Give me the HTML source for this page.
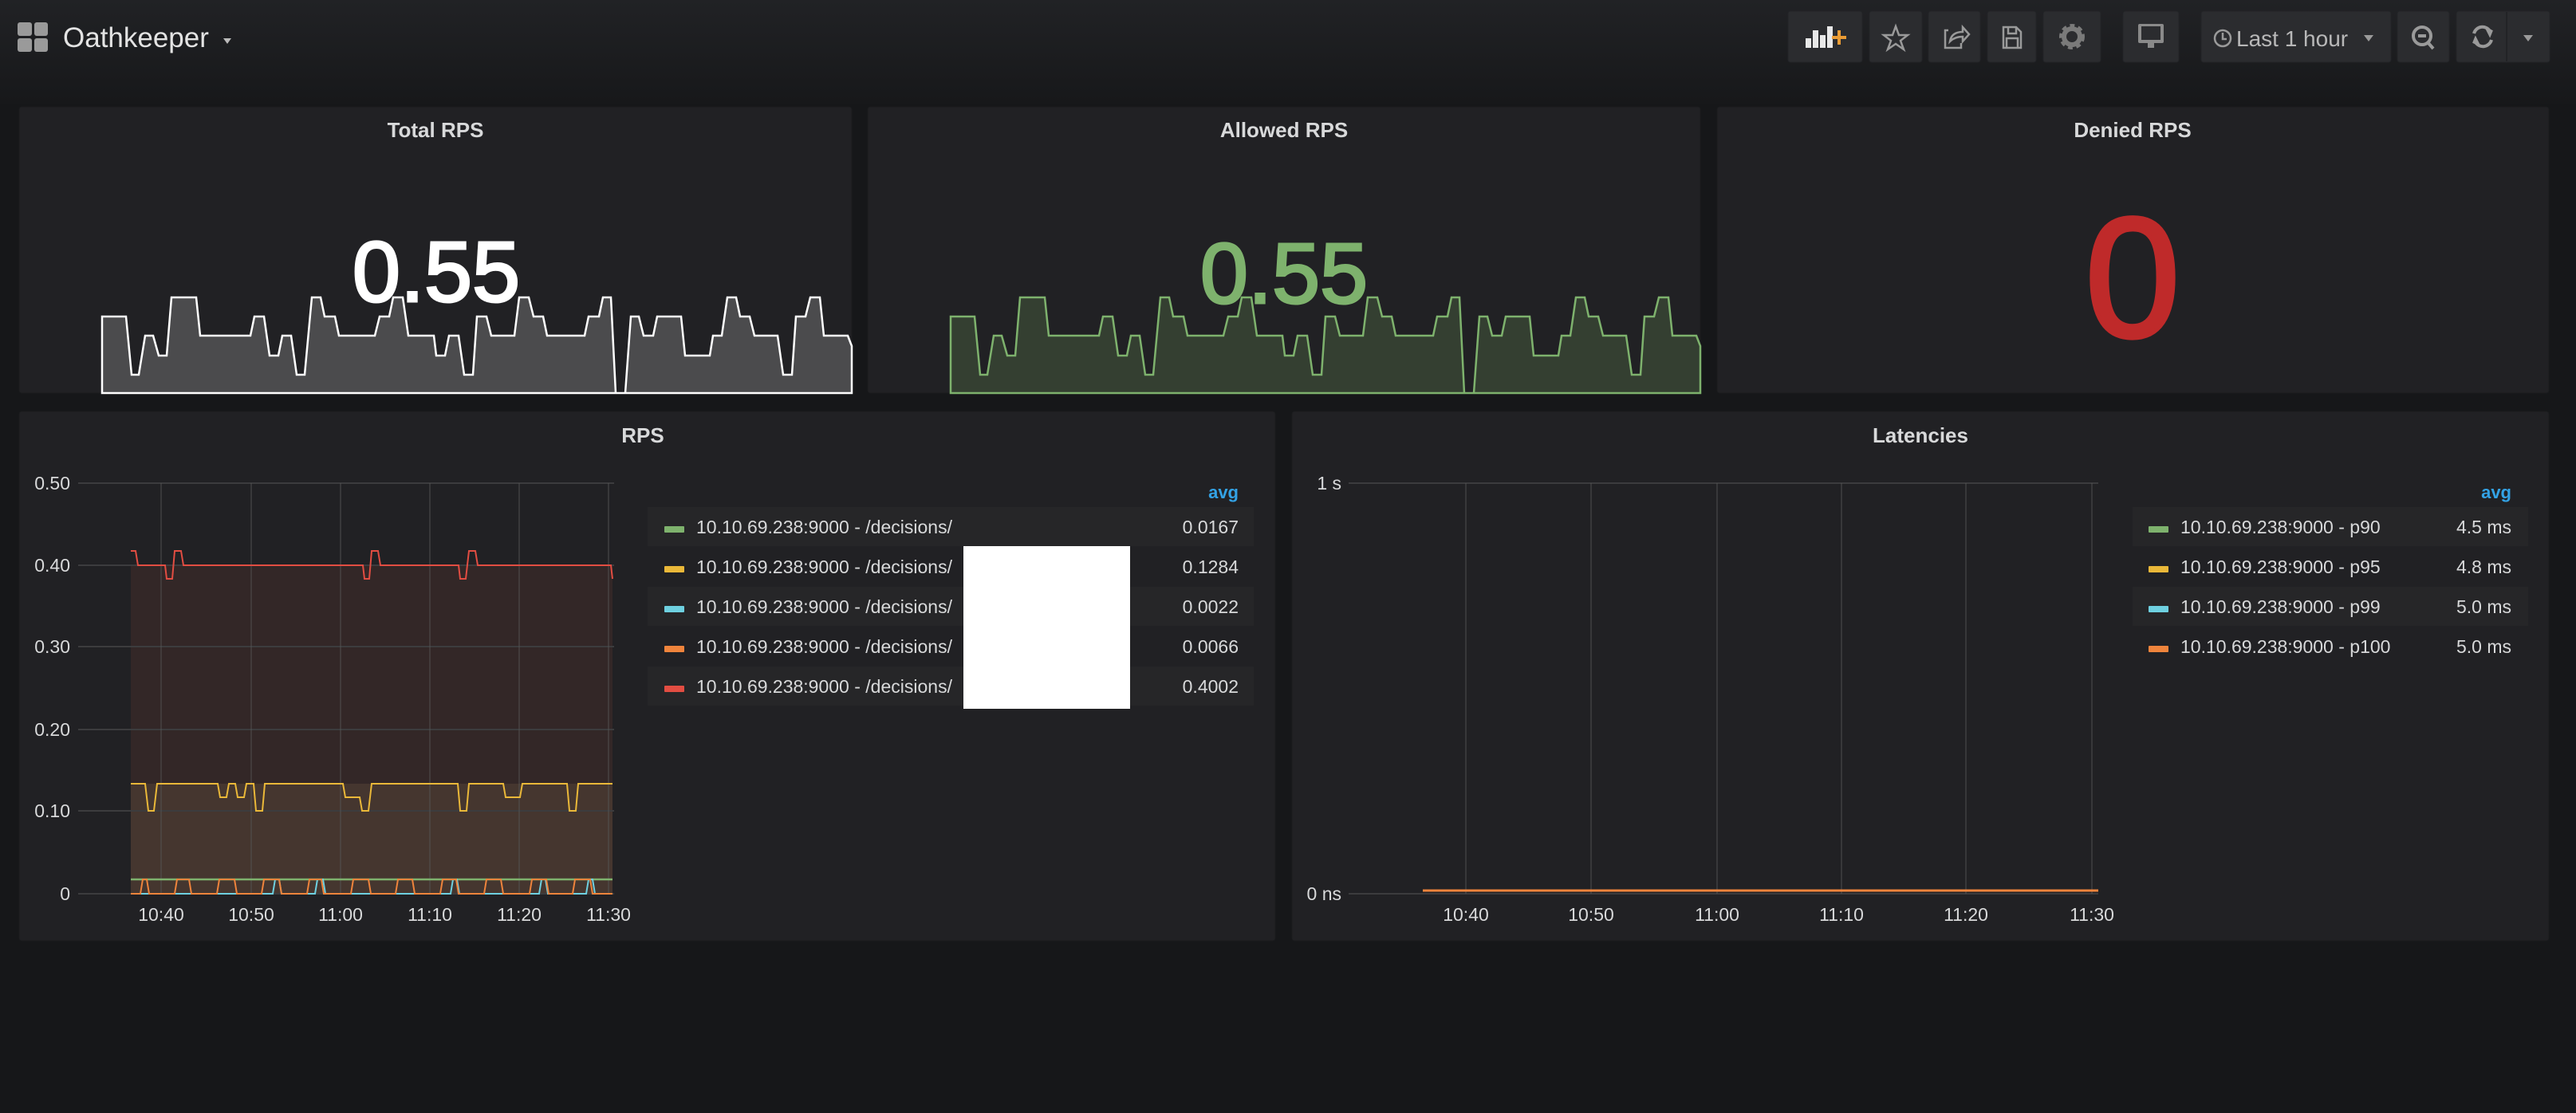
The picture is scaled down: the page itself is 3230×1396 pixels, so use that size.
<!DOCTYPE html>
<html><head><meta charset="utf-8"><style>
html,body{margin:0;padding:0;background:#161719;width:3230px;height:1396px;overflow:hidden}
svg{display:block}
text{font-family:"Liberation Sans",sans-serif}
</style></head><body>
<svg width="3230" height="1396" viewBox="0 0 3230 1396" xmlns="http://www.w3.org/2000/svg">
<defs>
<linearGradient id="hg" x1="0" y1="0" x2="0" y2="1"><stop offset="0" stop-color="#212225"/><stop offset="1" stop-color="#17181a"/></linearGradient>
<path id="spark" d="M104,359 L104,263 L134,263 L141,336 L150,336 L158,287 L168,287 L175,312 L185,312 L191,239 L222,239 L227,287 L290,287 L295,263 L307,263 L314,312 L325,312 L330,287 L341,287 L348,336 L358,336 L367,239 L378,239 L383,263 L396,263 L401,287 L446,287 L452,263 L464,263 L469,239 L481,239 L488,287 L520,287 L523,312 L534,312 L539,287 L551,287 L558,336 L569,336 L574,263 L586,263 L592,287 L621,287 L627,239 L639,239 L645,263 L657,263 L662,287 L709,287 L714,263 L727,263 L732,239 L742,239 L748,359 L760,359 L767,263 L777,263 L783,287 L795,287 L800,263 L830,263 L835,312 L866,312 L870,287 L881,287 L888,239 L899,239 L904,263 L916,263 L922,287 L951,287 L958,336 L969,336 L974,263 L986,263 L992,239 L1004,239 L1009,287 L1039,287 L1044,300 L1044,359 Z"/>
</defs>
<rect x="0" y="0" width="3230" height="130" fill="url(#hg)"/>
<g fill="#9a9a9a">
<rect x="22" y="28" width="18" height="17" rx="3"/><rect x="43" y="28" width="17" height="17" rx="3"/>
<rect x="22" y="48" width="18" height="17" rx="3"/><rect x="43" y="48" width="17" height="17" rx="3"/>
</g>
<text x="79" y="59" font-size="35" fill="#e3e3e3">Oathkeeper</text>
<path d="M280,48 L290,48 L285,55 Z" fill="#bbb"/>
<g fill="#2b2c2f" stroke="#232427">
<rect x="2242" y="14" width="93" height="64" rx="3"/>
<rect x="2344" y="14" width="66" height="64" rx="3"/>
<rect x="2418" y="14" width="65" height="64" rx="3"/>
<rect x="2492" y="14" width="61" height="64" rx="3"/>
<rect x="2562" y="14" width="72" height="64" rx="3"/>
<rect x="2662" y="14" width="70" height="64" rx="3"/>
<rect x="2760" y="14" width="238" height="64" rx="3"/>
<rect x="3006" y="14" width="65" height="64" rx="3"/>
<rect x="3080" y="14" width="117" height="64" rx="3"/>
</g>
<line x1="3143" y1="15" x2="3143" y2="77" stroke="#222326" stroke-width="2"/>
<g fill="#e8e8e8"><rect x="2264" y="48" width="7" height="12"/><rect x="2273" y="38" width="7" height="22"/><rect x="2282" y="44" width="7" height="16"/><rect x="2291" y="33" width="7" height="27"/></g>
<path d="M2304,38 h4 v7 h7 v4 h-7 v7 h-4 v-7 h-7 v-4 h7z" fill="#eb9c34"/>
<path d="M2377,33 l4,11 h11 l-9,7 l4,11 l-10,-7 l-10,7 l4,-11 l-9,-7 h11z" fill="none" stroke="#9a9a9a" stroke-width="2.5"/>
<path d="M2443,38 h-4 v22 h20 v-6 M2445,52 q2,-12 16,-12 v-6 l8,9 l-8,9 v-6 q-10,0 -16,6z" fill="none" stroke="#9a9a9a" stroke-width="2.5"/>
<path d="M2512,34 h16 l6,6 v20 h-22z M2518,34 v8 h10 v-8 M2516,48 h14 v12 h-14z" fill="none" stroke="#9a9a9a" stroke-width="2.5"/>
<circle cx="2598" cy="46" r="12" fill="none" stroke="#7a7a7a" stroke-width="8" stroke-dasharray="5 4"/><circle cx="2598" cy="46" r="10" fill="none" stroke="#7a7a7a" stroke-width="6"/>
<rect x="2681" y="30" width="32" height="24" rx="2" fill="#8a8a8a"/><rect x="2685" y="33" width="24" height="17" fill="#2b2c2f"/><rect x="2693" y="54" width="8" height="6" fill="#8a8a8a"/>
<circle cx="2787" cy="48" r="10" fill="none" stroke="#9a9a9a" stroke-width="2.5"/><path d="M2787,41 v8 h5" stroke="#9a9a9a" stroke-width="2.5" fill="none"/>
<text x="2804" y="58" font-size="28" fill="#b8b8b8">Last 1 hour</text>
<path d="M2964,44 L2976,44 L2970,52 Z" fill="#9a9a9a"/>
<circle cx="3037" cy="45" r="11" fill="none" stroke="#9a9a9a" stroke-width="4"/><path d="M3032,45 h10 M3044,53 l7,8" stroke="#9a9a9a" stroke-width="4"/>
<path d="M3102,42 a11,11 0 0 1 20,-3 M3124,50 a11,11 0 0 1 -20,3" fill="none" stroke="#9a9a9a" stroke-width="4"/>
<path d="M3118,36 l6,3 l-2,5z M3108,56 l-6,-3 l2,-5z" fill="#9a9a9a" stroke="#9a9a9a" stroke-width="3"/>
<path d="M3164,44 L3176,44 L3170,52 Z" fill="#9a9a9a"/>

<g fill="#212124" stroke="#1a1b1d">
<rect x="24" y="134" width="1044" height="359" rx="3"/>
<rect x="1088" y="134" width="1044" height="359" rx="3"/>
<rect x="2153" y="134" width="1043" height="359" rx="3"/>
<rect x="24" y="516" width="1575" height="664" rx="3"/>
<rect x="1620" y="516" width="1576" height="664" rx="3"/>
</g>
<g transform="translate(24,134)"><use href="#spark" fill="#4b4b4d" stroke="#ffffff" stroke-width="2.5"/></g>
<g transform="translate(1088,134)"><use href="#spark" fill="#343f31" stroke="#7eb26d" stroke-width="2.5"/></g>
<g font-weight="bold" font-size="26" fill="#d8d9da" text-anchor="middle">
<text x="546" y="172">Total RPS</text>
<text x="1610" y="172">Allowed RPS</text>
<text x="2674" y="172">Denied RPS</text>
<text x="806" y="555">RPS</text>
<text x="2408" y="555">Latencies</text>
</g>
<g font-size="108" text-anchor="middle" stroke-width="3">
<text x="547" y="378" fill="#ffffff" stroke="#ffffff">0.55</text>
<text x="1610" y="380" fill="#7eb26d" stroke="#7eb26d">0.55</text>
</g>
<text x="2674" y="422" font-size="214" text-anchor="middle" fill="#bf2a2a" stroke="#bf2a2a" stroke-width="5">0</text>

<rect x="164" y="709" width="604" height="412" fill="#332727"/>
<rect x="164" y="983" width="604" height="138" fill="#45362f"/>
<g stroke="#3c3c3e" stroke-width="2">
<line x1="98" y1="606" x2="770" y2="606"/><line x1="98" y1="709" x2="770" y2="709"/><line x1="98" y1="811" x2="770" y2="811"/><line x1="98" y1="915" x2="770" y2="915"/><line x1="98" y1="1017" x2="770" y2="1017"/><line x1="98" y1="1121" x2="770" y2="1121"/>
</g>
<g stroke="#555" stroke-width="1.5" opacity="0.6">
<line x1="202" y1="606" x2="202" y2="1121"/><line x1="315" y1="606" x2="315" y2="1121"/><line x1="427" y1="606" x2="427" y2="1121"/><line x1="539" y1="606" x2="539" y2="1121"/><line x1="651" y1="606" x2="651" y2="1121"/><line x1="763" y1="606" x2="763" y2="1121"/>
</g>
<path d="M164,691 L170,691 L173,709 L207,709 L209,726 L216,726 L219,691 L227,691 L230,709 L455,709 L457,726 L463,726 L466,691 L474,691 L477,709 L575,709 L577,726 L584,726 L588,691 L596,691 L599,709 L766,709 L768,726" fill="none" stroke="#e24d42" stroke-width="2"/>
<path d="M164,983 L182,983 L186,1017 L193,1017 L197,983 L273,983 L276,1000 L284,1000 L287,983 L295,983 L298,1000 L306,1000 L309,983 L318,983 L321,1017 L329,1017 L332,983 L430,983 L433,1000 L451,1000 L454,1017 L462,1017 L466,983 L574,983 L577,1017 L585,1017 L588,983 L631,983 L634,1000 L652,1000 L655,983 L711,983 L714,1017 L722,1017 L725,983 L768,983" fill="none" stroke="#eab839" stroke-width="2"/>
<line x1="164" y1="1103" x2="768" y2="1103" stroke="#7eb26d" stroke-width="2.5"/>
<path d="M164,1121 L342,1121 L345,1103 L350,1103 L353,1121 L395,1121 L398,1103 L405,1103 L408,1121 L565,1121 L568,1103 L573,1103 L576,1121 L676,1121 L679,1103 L684,1103 L687,1121 L735,1121 L738,1103 L743,1103 L746,1121 L768,1121" fill="none" stroke="#6ed0e0" stroke-width="2"/>
<path d="M164,1121 L176,1121 L179,1103 L184,1103 L187,1121 L219,1121 L222,1103 L237,1103 L240,1121 L272,1121 L275,1103 L294,1103 L297,1121 L328,1121 L331,1103 L350,1103 L353,1121 L385,1121 L388,1103 L403,1103 L406,1121 L440,1121 L443,1103 L462,1103 L465,1121 L496,1121 L499,1103 L517,1103 L520,1121 L552,1121 L555,1103 L572,1103 L575,1121 L607,1121 L610,1103 L628,1103 L631,1121 L664,1121 L667,1103 L685,1103 L688,1121 L718,1121 L721,1103 L740,1103 L743,1121 L768,1121" fill="none" stroke="#ef843c" stroke-width="2"/>
<g font-size="23" fill="#d8d9da">
<g text-anchor="end"><text x="88" y="614">0.50</text><text x="88" y="717">0.40</text><text x="88" y="819">0.30</text><text x="88" y="923">0.20</text><text x="88" y="1025">0.10</text><text x="88" y="1129">0</text></g>
<g text-anchor="middle"><text x="202" y="1155">10:40</text><text x="315" y="1155">10:50</text><text x="427" y="1155">11:00</text><text x="539" y="1155">11:10</text><text x="651" y="1155">11:20</text><text x="763" y="1155">11:30</text></g>
</g>
<g fill="#262628"><rect x="812" y="636" width="760" height="49"/><rect x="812" y="736" width="760" height="49"/><rect x="812" y="836" width="760" height="49"/></g>
<text x="1553" y="625" font-size="22" font-weight="bold" fill="#33a2e5" text-anchor="end">avg</text>
<rect x="833" y="660" width="25" height="8" rx="1" fill="#7eb26d"/>
<rect x="833" y="710" width="25" height="8" rx="1" fill="#eab839"/>
<rect x="833" y="760" width="25" height="8" rx="1" fill="#6ed0e0"/>
<rect x="833" y="810" width="25" height="8" rx="1" fill="#ef843c"/>
<rect x="833" y="860" width="25" height="8" rx="1" fill="#e24d42"/>
<g font-size="23" fill="#d8d9da">
<text x="873" y="669">10.10.69.238:9000 - /decisions/</text>
<text x="873" y="719">10.10.69.238:9000 - /decisions/</text>
<text x="873" y="769">10.10.69.238:9000 - /decisions/</text>
<text x="873" y="819">10.10.69.238:9000 - /decisions/</text>
<text x="873" y="869">10.10.69.238:9000 - /decisions/</text>
<g text-anchor="end"><text x="1553" y="669">0.0167</text><text x="1553" y="719">0.1284</text><text x="1553" y="769">0.0022</text><text x="1553" y="819">0.0066</text><text x="1553" y="869">0.4002</text></g>
</g>
<rect x="1208" y="685" width="209" height="204" fill="#ffffff"/>

<g stroke="#3c3c3e" stroke-width="2"><line x1="1691" y1="606" x2="2631" y2="606"/><line x1="1691" y1="1121" x2="2631" y2="1121"/></g>
<g stroke="#555" stroke-width="1.5" opacity="0.6">
<line x1="1838" y1="606" x2="1838" y2="1121"/><line x1="1995" y1="606" x2="1995" y2="1121"/><line x1="2153" y1="606" x2="2153" y2="1121"/><line x1="2309" y1="606" x2="2309" y2="1121"/><line x1="2465" y1="606" x2="2465" y2="1121"/><line x1="2623" y1="606" x2="2623" y2="1121"/>
</g>
<line x1="1784" y1="1117" x2="2631" y2="1117" stroke="#ef843c" stroke-width="3"/>
<g font-size="23" fill="#d8d9da">
<g text-anchor="end"><text x="1682" y="614">1 s</text><text x="1682" y="1129">0 ns</text></g>
<g text-anchor="middle"><text x="1838" y="1155">10:40</text><text x="1995" y="1155">10:50</text><text x="2153" y="1155">11:00</text><text x="2309" y="1155">11:10</text><text x="2465" y="1155">11:20</text><text x="2623" y="1155">11:30</text></g>
</g>
<g fill="#262628"><rect x="2674" y="636" width="496" height="49"/><rect x="2674" y="736" width="496" height="49"/></g>
<text x="3149" y="625" font-size="22" font-weight="bold" fill="#33a2e5" text-anchor="end">avg</text>
<rect x="2694" y="660" width="25" height="8" rx="1" fill="#7eb26d"/>
<rect x="2694" y="710" width="25" height="8" rx="1" fill="#eab839"/>
<rect x="2694" y="760" width="25" height="8" rx="1" fill="#6ed0e0"/>
<rect x="2694" y="810" width="25" height="8" rx="1" fill="#ef843c"/>
<g font-size="23" fill="#d8d9da">
<text x="2734" y="669">10.10.69.238:9000 - p90</text>
<text x="2734" y="719">10.10.69.238:9000 - p95</text>
<text x="2734" y="769">10.10.69.238:9000 - p99</text>
<text x="2734" y="819">10.10.69.238:9000 - p100</text>
<g text-anchor="end"><text x="3149" y="669">4.5 ms</text><text x="3149" y="719">4.8 ms</text><text x="3149" y="769">5.0 ms</text><text x="3149" y="819">5.0 ms</text></g>
</g>
</svg>
</body></html>
